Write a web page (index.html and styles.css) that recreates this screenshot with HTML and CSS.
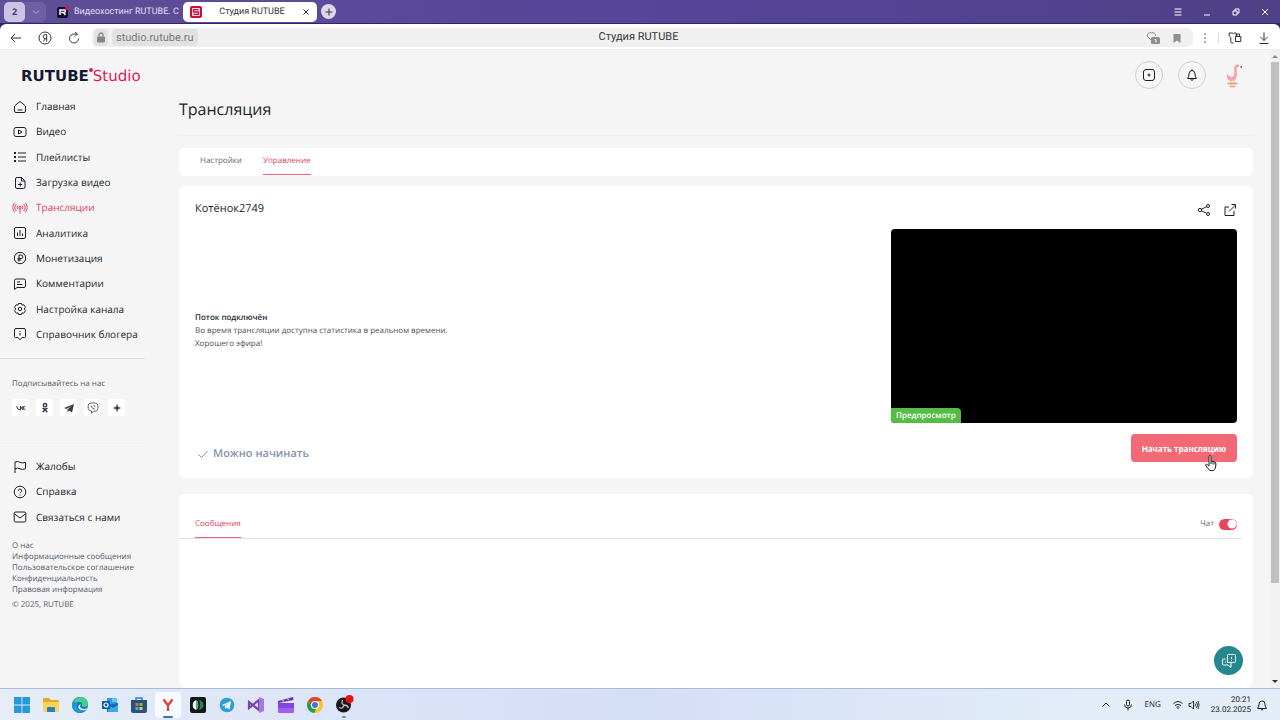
FILE: index.html
```html
<!DOCTYPE html>
<html lang="ru">
<head>
<meta charset="utf-8">
<title>Студия RUTUBE</title>
<meta name="viewport" content="width=device-width, initial-scale=1">
<link rel="stylesheet" href="styles.css">
</head>
<body>
<header class="titlebar">
  <div class="tab-group">
    <span class="tab-count">2</span>
    <button class="plain" aria-label="Список вкладок"><svg class="i10" viewBox="0 0 16 16"><path d="M3 6l5 4 5-4"/></svg></button>
  </div>
  <div class="tab">
    <svg class="fav" viewBox="0 0 12 12"><rect y="1" width="11" height="11" rx="2" fill="#0b1030"/><circle cx="10" cy="2" r="2" fill="#e8104a"/><path d="M3 9V4h4.500q1 0 1 1t-1 1.500H4M6.500 6.500L8.500 9" stroke="#fff" stroke-width="1.500"/></svg>
    <span class="tab-name">Видеохостинг RUTUBE. С</span>
  </div>
  <div class="tab tab-active">
    <svg class="fav" viewBox="0 0 12 12"><rect width="12" height="12" rx="2" fill="#c8103e"/><rect x="2" y="2" width="8" height="8" rx="1" fill="#f8dce4"/><path d="M8.500 3.700h-5v2.300h5v2.300h-5" stroke="#c8103e" stroke-width="1.300"/></svg>
    <span class="tab-name">Студия RUTUBE</span>
    <button class="plain" aria-label="Закрыть вкладку"><svg class="i8" viewBox="0 0 8 8"><path d="M1.500 1.500l5 5M6.500 1.500l-5 5"/></svg></button>
  </div>
  <button class="new-tab" aria-label="Новая вкладка"><svg class="i10" viewBox="0 0 10 10"><path d="M5 1.500v7M1.500 5h7"/></svg></button>
  <div class="window-buttons">
    <button class="plain" aria-label="Меню"><svg class="i10" viewBox="0 0 10 10"><path d="M1.500 2h7M1.500 5h7M1.500 8h7"/></svg></button>
    <button class="plain" aria-label="Свернуть"><svg class="i10" viewBox="0 0 10 10"><path d="M2 8h6"/></svg></button>
    <button class="plain" aria-label="Развернуть"><svg class="i10" viewBox="0 0 10 10"><path d="M2 4h4v4H2zM4 4V2h4v4H6"/></svg></button>
    <button class="plain" aria-label="Закрыть"><svg class="i10" viewBox="0 0 10 10"><path d="M2 2l6 6M8 2l-6 6"/></svg></button>
  </div>
</header>

<div class="toolbar">
  <button class="plain" aria-label="Назад"><svg class="i14" viewBox="0 0 14 14"><path d="M12 7H2M6 3L2 7l4 4"/></svg></button>
  <button class="plain" aria-label="Яндекс"><svg class="i14" viewBox="0 0 14 14"><circle cx="7" cy="7" r="6"/><path d="M8.700 10.500v-7H7.500a2 2 0 0 0 0 4.200h1.200M7.300 7.700l-2 2.800"/></svg></button>
  <button class="plain" aria-label="Обновить"><svg class="i14" viewBox="0 0 14 14"><path d="M11.500 7.500A4.500 4.500 0 1 1 7 3h3M8 1l2.500 2L8 5.500"/></svg></button>
  <div class="address">
    <svg class="i14 lock" viewBox="0 0 14 14"><rect x="3" y="6" width="8" height="6" rx="1" fill="#858585" stroke="none"/><path d="M5 6V4.500a2 2 0 0 1 4 0V6" stroke="#858585" stroke-width="1.300"/></svg>
    <span class="url">studio.rutube.ru</span>
    <span class="page-name">Студия RUTUBE</span>
    <svg class="i14 grey" viewBox="0 0 14 14"><path d="M5 9L1.500 5.500A2.800 2.800 0 0 1 5.500 2 2.800 2.800 0 0 1 9.500 5"/><rect x="5" y="6" width="9" height="7" rx="1.500" fill="#8e8e8e" stroke="none"/><path d="M8.500 8.500h1.500v3" stroke="#fff"/></svg>
    <svg class="i14 grey" viewBox="0 0 14 14"><path d="M3.500 3h7v9L7 9.500 3.500 12z" fill="#8e8e8e" stroke="none"/></svg>
  </div>
  <button class="plain" aria-label="Ещё"><svg class="i14" viewBox="0 0 14 14"><path d="M7 2.500v1.300M7 6.500v1.300M7 10.500v1.300" stroke-width="1.300"/></svg></button>
  <i class="toolbar-line"></i>
  <button class="plain" aria-label="Коллекции"><svg class="i14" viewBox="0 0 14 14"><path d="M5.500 12H4q-1.200 0-1.200-1.200V6.500L1.200 5V2h3q1 1 2 0h2v4M7.500 5.500h5.300v5H7.500zM8.800 5.500V3h2.700v2.500"/></svg></button>
  <button class="plain" aria-label="Загрузки"><svg class="i14" viewBox="0 0 14 14"><path d="M7 1.500v8M3.500 6L7 9.500 10.500 6M2.500 12.500h9"/></svg></button>
</div>

<div class="page">
  <aside class="sidebar">
    <a class="logo" href="#"><b>RUTUBE</b><i></i><span>Studio</span></a>
    <nav class="menu">
      <a href="#"><svg class="i14" viewBox="0 0 14 14"><path d="M1.500 6L7 1.500 12.500 6v5q0 1.500-1.500 1.500H3Q1.500 12.500 1.500 11zM4.500 10h5"/></svg>Главная</a>
      <a href="#"><svg class="i14" viewBox="0 0 14 14"><rect x="1" y="2.500" width="12" height="9" rx="2"/><path d="M5.500 5v4L9 7z"/></svg>Видео</a>
      <a href="#"><svg class="i14" viewBox="0 0 14 14"><path d="M5 3h8M5 7h8M5 11h8"/><path d="M1 3h2M1 7h2M1 11h2" stroke-width="2"/></svg>Плейлисты</a>
      <a href="#"><svg class="i14" viewBox="0 0 14 14"><path d="M8.500 1.500H4Q2.500 1.500 2.500 3v8q0 1.500 1.500 1.500h6.500q1.500 0 1.500-1.500V5zv3.500H12M7.200 6.500v4M5.200 8.500h4"/></svg>Загрузка видео</a>
      <a class="current" href="#"><svg class="i14" viewBox="0 0 14 14"><path d="M3.300 3a5 5 0 0 0 0 7M10.700 3a5 5 0 0 1 0 7M1.700 1.700a7 7 0 0 0 0 9.600M12.300 1.700a7 7 0 0 1 0 9.600M5 4.500a3 3 0 0 0 0 4M9 4.500a3 3 0 0 1 0 4M7 7v5.500"/><circle cx="7" cy="6.300" r="1"/></svg>Трансляции</a>
      <a href="#"><svg class="i14" viewBox="0 0 14 14"><rect x="1.500" y="1.500" width="11" height="11" rx="1.500"/><path d="M4.500 6.500V10M7 4v6M9.500 7.500V10"/></svg>Аналитика</a>
      <a href="#"><svg class="i14" viewBox="0 0 14 14"><circle cx="7" cy="7" r="5.700"/><path d="M6 10.500V4h2a1.800 1.800 0 0 1 0 3.600H4.500M4.500 9H8"/></svg>Монетизация</a>
      <a href="#"><svg class="i14" viewBox="0 0 14 14"><path d="M1.500 12.500v-9q0-1.500 1.500-1.500h8q1.500 0 1.500 1.500V9q0 1.500-1.500 1.500H4zM4 5h3M4 7.500h5.500"/></svg>Комментарии</a>
      <a href="#"><svg class="i14" viewBox="0 0 14 14"><path d="M5.500 1.500h3l.5 1.700 1.700-.5 1.800 2.600L11.200 7l1.300 1.700-1.800 2.600-1.700-.5-.5 1.700h-3L5 10.800l-1.700.5-1.800-2.600L2.800 7 1.500 5.300l1.800-2.600 1.700.5z"/><circle cx="7" cy="7" r="1.700"/></svg>Настройка канала</a>
      <a href="#"><svg class="i14" viewBox="0 0 14 14"><path d="M3 1.500h8q1.500 0 1.500 1.500v6.500q0 1-1 1H9L7 12.800 5 10.500H2.500q-1 0-1-1V3q0-1.500 1.500-1.500zM7 4v1M7 6v2.500"/></svg>Справочник блогера</a>
    </nav>
    <hr class="side-line">
    <p class="follow">Подписывайтесь на нас</p>
    <div class="social">
      <a href="#" aria-label="ВКонтакте"><svg class="i12" viewBox="0 0 12 12"><path d="M1.500 4q.8 4 4 4V4M5.500 6Q7.700 5.700 8 4M5.500 5.800Q7.500 6 8.200 8M8 4v4M8.200 5.900L10.300 4M8.200 5.900L10.500 8"/></svg></a>
      <a href="#" aria-label="Одноклассники"><svg class="i12" viewBox="0 0 12 12"><circle cx="6" cy="3.200" r="1.700" stroke-width="1.400"/><path d="M3.500 6.200q2.500 1.700 5 0M6 7.500l-2.300 2.800M6 7.500l2.300 2.800" stroke-width="1.400"/></svg></a>
      <a href="#" aria-label="Telegram"><svg class="i12" viewBox="0 0 12 12"><path d="M1 6l10-4-2 8.500-3-2-1.500 1.500V7.500L8.500 4 3.500 7z" fill="currentColor" stroke="none"/></svg></a>
      <a href="#" aria-label="Viber"><svg class="i12" viewBox="0 0 12 12"><path d="M3 1.200q3-.6 6 0 1.700.5 1.900 2.300v3Q10.500 8.700 9 9L6.500 9.300 4.500 11.200V9Q1.500 8.700 1.200 6.500v-3Q1.500 1.500 3 1.200zM4 3.500q.2 3 3.800 3.700M6.300 3.200q1.700.2 1.800 1.800" stroke-width=".8"/></svg></a>
      <a href="#" aria-label="Дзен"><svg class="i12" viewBox="0 0 12 12"><path d="M6 2.500Q6.200 5.800 9.500 6 6.200 6.200 6 9.500 5.800 6.200 2.500 6 5.800 5.800 6 2.500z" fill="currentColor" stroke-width=".6"/></svg></a>
    </div>
    <hr class="side-line faint">
    <nav class="menu menu-help">
      <a href="#"><svg class="i14" viewBox="0 0 14 14"><path d="M2 13V2q2.500-1 5 .3t5.500 0v6.500q-3 1.300-5.500 0T2 8.800"/></svg>Жалобы</a>
      <a href="#"><svg class="i14" viewBox="0 0 14 14"><circle cx="7" cy="7" r="5.800"/><path d="M5.300 5.800a1.700 1.700 0 1 1 2.500 1.500Q7 7.700 7 8.300M7 9.600v1"/></svg>Справка</a>
      <a href="#"><svg class="i14" viewBox="0 0 14 14"><rect x="1.200" y="2" width="11.600" height="10" rx="1.500"/><path d="M1.500 4L7 8l5.500-4"/></svg>Связаться с нами</a>
    </nav>
    <div class="legal">
      <a href="#">О нас</a>
      <a href="#">Информационные сообщения</a>
      <a href="#">Пользовательское соглашение</a>
      <a href="#">Конфиденциальность</a>
      <a href="#">Правовая информация</a>
    </div>
    <p class="copyright">© 2025, RUTUBE</p>
  </aside>

  <main class="main">
    <div class="top-actions">
      <button class="round" aria-label="Добавить"><svg class="i14" viewBox="0 0 14 14"><rect x="1.500" y="1.500" width="11" height="11" rx="2.500"/><path d="M7 5.500v3M5.500 7h3"/></svg></button>
      <button class="round" aria-label="Уведомления"><svg class="i14" viewBox="0 0 14 14"><path d="M2.500 10.500Q4 9 4 6a3 3.500 0 0 1 6 0q0 3 1.500 4.500zM5.500 11.500q1.500 1.500 3 0M7 1.200v1.300"/></svg></button>
      <button class="avatar" aria-label="Профиль"><svg viewBox="0 0 26 26"><path d="M17 4q-3.500-1-3.500 2v8" stroke="#f0a0ac" stroke-width="2.500"/><path d="M5 12q-1 7.500 5 7 5.500-.5 4.700-8l-2.500 3q-4 2-7.200-2z" fill="#f3a5ae" stroke="none"/><path d="M9 19v4M12 18v5" stroke="#f3b49c"/><path d="M5.500 21.500h10M8 24.500h5" stroke="#ee9c62" stroke-width="1.400"/><path d="M18.500 5h1.500" stroke="#444" stroke-width="1.500"/></svg></button>
    </div>
    <h1>Трансляция</h1>
    <div class="tabs">
      <a href="#">Настройки</a>
      <a class="selected" href="#">Управление</a>
    </div>

    <section class="card stream">
      <div class="stream-head">
        <h2>Котёнок2749</h2>
        <button class="plain" aria-label="Поделиться"><svg class="i14" viewBox="0 0 14 14"><circle cx="3" cy="7" r="1.700"/><circle cx="11" cy="3" r="1.500"/><circle cx="11" cy="11" r="1.500"/><path d="M4.500 6.200L9.600 3.700M4.500 7.800l5.100 2.500"/></svg></button>
        <button class="plain" aria-label="Открыть"><svg class="i14" viewBox="0 0 14 14"><path d="M6 4H2v8.500h9V8M6 8.500L12.500 2M8.500 1.500h4v4"/></svg></button>
      </div>
      <div class="stream-body">
        <div class="status">
          <strong>Поток подключён</strong>
          <span>Во время трансляции доступна статистика в реальном времени.</span>
          <span>Хорошего эфира!</span>
        </div>
        <div class="video"><span class="badge">Предпросмотр</span></div>
      </div>
      <div class="stream-foot">
        <span class="ready"><svg class="i14" viewBox="0 0 14 14"><path d="M2.500 7.500L5.500 10.500 11.500 4"/></svg>Можно начинать</span>
        <button class="start">Начать трансляцию
          <svg class="pointer" viewBox="0 0 14 18"><path d="M5 9V2.500q0-1 1-1t1 1V7l3 .6q2 .4 2 2.400 0 5-2.500 6.500H6Q3.500 15 1.500 10.800q.5-1.300 2 0L5 12z" fill="#fff" stroke="#222"/><path d="M9 8v2.500M7 7v3M11 8.500v2" stroke="#222"/></svg>
        </button>
      </div>
    </section>

    <section class="card chat">
      <div class="chat-head">
        <a class="selected" href="#">Сообщения</a>
        <label class="switch">Чат <input type="checkbox" role="switch" checked></label>
      </div>
    </section>
  </main>
  <div class="scrollbar"><i class="arrow-up"></i><i class="thumb"></i><i class="arrow-down"></i></div>
  <button class="support" aria-label="Поддержка"><svg viewBox="0 0 16 16"><rect x="6.500" y="1.500" width="8" height="8" rx="1"/><path d="M4.500 6H2.500q-1 0-1 1v4q0 1 1 1H7l3 2.500V10M10.500 4v2M10.500 7.200v.8M4 9h1M6 9h1"/></svg></button>
</div>

<footer class="taskbar">
  <div class="apps">
    <button aria-label="Пуск"><svg viewBox="0 0 16 16"><path d="M0 0h7.600v7.600H0zM8.400 0H16v7.600H8.400zM0 8.400h7.600V16H0zM8.400 8.400H16V16H8.400z" fill="#2798d8"/></svg></button>
    <button aria-label="Проводник"><svg viewBox="0 0 16 16"><path d="M0 2q0-1 1-1h5l2 2h7q1 0 1 1v3H0z" fill="#e5a72e"/><path d="M0 5h16v9q0 1-1 1H1q-1 0-1-1z" fill="#fbd35b"/><path d="M4 11q0-1 1-1h6q1 0 1 1v4H4z" fill="#2383bd"/></svg></button>
    <button aria-label="Edge"><svg viewBox="0 0 16 16"><circle cx="8" cy="8" r="8" fill="#1673bd"/><path d="M1 6Q3 0 9 0q6 .5 7 6 0 4-4 4-3 0-2-2 1-3-3-3-4 0-6 1z" fill="#43cf8c"/><path d="M0 8q2-4 6-3-2 2-1 5 2 4 7 3-3 4-8 2-4-2-4-7z" fill="#2196d9"/><path d="M9 7q-2 2 0 4 3 2 6 0l-1 2q-4 1-7-1-2-4 2-5z" fill="#e9f2f9"/></svg></button>
    <button aria-label="Outlook"><svg viewBox="0 0 16 16"><path d="M5 1h10v8H5z" fill="#2a9ee0"/><path d="M5 9l5-2 6-1v9H5z" fill="#1769b5"/><path d="M10 1h5v4h-5z" fill="#64c8f3"/><path d="M6 8l5 3 5-3v7H6z" fill="#3aabe8"/><rect y="4" width="8" height="8" rx="1" fill="#0f5ba6"/><circle cx="4" cy="8" r="2" stroke="#fff" stroke-width="1.200"/></svg></button>
    <button aria-label="Магазин"><svg viewBox="0 0 16 16"><path d="M5 4V1h6v3" stroke="#2f87c9" stroke-width="1.500"/><path d="M0 3h16v11q0 2-2 2H2q-2 0-2-2z" fill="#27527c"/><path d="M4.500 6h3v3h-3z" fill="#e96249"/><path d="M8.500 6h3v3h-3z" fill="#7bbd4c"/><path d="M4.500 10h3v3h-3z" fill="#4dabdf"/><path d="M8.500 10h3v3h-3z" fill="#f4c64a"/></svg></button>
    <button class="app-active" aria-label="Яндекс Браузер"><svg viewBox="0 0 16 16"><path d="M3.500 2.500L8 8.500l4.500-6M8 8v6" stroke="#e63c38" stroke-width="2.200"/></svg></button>
    <button aria-label="Запись"><svg viewBox="0 0 16 16"><rect width="16" height="16" rx="2" fill="#0b1917"/><path d="M6.500 3a5.200 5.200 0 0 0 0 10z" fill="#f1f6f3"/><path d="M9 3q4.500 1 4.500 5T9 13q2-5 0-10z" fill="#278557"/><path d="M7 4q2 4 0 8" stroke="#7ecf9b"/></svg></button>
    <button aria-label="Telegram"><svg viewBox="0 0 16 16"><circle cx="8" cy="8" r="7.300" fill="#299fd4"/><path d="M3 8l9-4-1.500 8.500-3-2L6 12V9l4-3-5.500 3z" fill="#fff"/></svg></button>
    <button aria-label="Visual Studio"><svg viewBox="0 0 16 16"><path d="M1 5l10 8V3L1 11z" stroke="#7545ad" stroke-width="2.200"/><path d="M11 0l5 2v12l-5 2z" fill="#a77ad9"/></svg></button>
    <button aria-label="Clipchamp"><svg viewBox="0 0 16 16"><path d="M0 4l15-4 .5 3L0 6z" fill="#6731a5"/><path d="M0 6h16v8q0 2-2 2H2q-2 0-2-2z" fill="#8146df"/><path d="M0 11h16v3q0 2-2 2H2q-2 0-2-2z" fill="#a15cf0"/><path d="M4 3l2 1.500M9 1.500L11 3" stroke="#c79cf4" stroke-width="1.500"/></svg></button>
    <button aria-label="Chrome"><svg viewBox="0 0 16 16"><circle cx="8" cy="8" r="8" fill="#f5c52b"/><path d="M1.100 4A8 8 0 0 1 15 4H8L5 9.500z" fill="#df4438"/><path d="M1.100 4L5 10l4 2-2 4A8 8 0 0 1 1.100 4z" fill="#289b52"/><circle cx="8" cy="8" r="4" fill="#fff"/><circle cx="8" cy="8" r="3" fill="#3879d8"/></svg></button>
    <button class="app-running" aria-label="OBS"><svg viewBox="0 0 16 16"><circle cx="7.500" cy="8" r="7.500" fill="#1b1718"/><path d="M6.500 3q-1.500 4 1.500 5M3 10.500q4 2 5-2.500M12.500 11q-1-3-4.500-3" stroke="#bcb9bb" stroke-width="1.300"/><circle cx="13.500" cy="2" r="4" fill="#e9101a"/></svg></button>
  </div>
  <div class="tray">
    <button class="plain" aria-label="Скрытые значки"><svg class="i10" viewBox="0 0 10 10"><path d="M1.500 6.500L5 3l3.500 3.500"/></svg></button>
    <svg class="i12" viewBox="0 0 12 12"><rect x="4.500" y="1" width="3" height="6" rx="1.500"/><path d="M2.500 5.500q0 3.500 3.500 3.500t3.500-3.500M6 9v2.500"/></svg>
    <span class="lang">ENG</span>
    <span class="net"><svg class="i12" viewBox="0 0 12 12"><path d="M1.500 4.500q4.500-4 9 0M3 6.500q3-2.500 6 0M4.500 8.300q1.500-1 3 0M6 9v1"/></svg>
    <svg class="i12" viewBox="0 0 12 12"><path d="M1 4.500h2L5.500 2v8L3 7.500H1zM7 4.500q1 1.500 0 3M8.500 3q2 3 0 6M10 2q2 4 0 8" stroke-width=".9"/></svg></span>
    <time class="clock"><span>20:21</span><span>23.02.2025</span></time>
    <svg class="i12" viewBox="0 0 12 12"><path d="M1.500 9.500Q3 8 3 5a3 3 0 0 1 6 0q0 3 1.500 4.500zM5 10.500q1 1 2 0"/></svg>
  </div>
</footer>
</body>
</html>
```
FILE: styles.css
```css
* { box-sizing: border-box; }
body {
  margin: 0;
  height: 100vh;
  display: flex;
  flex-direction: column;
  overflow: hidden;
  background: #33246a;
  color: #1c1f26;
  font: 10px/13px "Open Sans", "Noto Sans", sans-serif;
  text-rendering: geometricPrecision;
}
a { color: inherit; text-decoration: none; }
h1, h2, p { margin: 0; font-weight: 500; }
button { font: inherit; color: inherit; border: 0; padding: 0; background: none; }
svg { display: block; flex: none; fill: none; stroke: currentColor; overflow: visible; }
.taskbar .apps svg { stroke: none; width: 16px; height: 16px; }
.plain { display: flex; align-items: center; justify-content: center; }
.i8 { width: 8px; height: 8px; }
.i10 { width: 10px; height: 10px; }
.i12 { width: 12px; height: 12px; }
.i14 { width: 14px; height: 14px; }
.fav { width: 12px; height: 12px; stroke: none; }

/* Browser window */
.titlebar {
  flex: none;
  height: 24px;
  display: flex;
  align-items: center;
  padding: 0 10px 0 4px;
  background: linear-gradient(90deg, #5f4f96, #56459a 50%, #4f4187);
  border-bottom: 1px solid #33246a;
}
.tab-group { display: flex; align-items: center; gap: 6px; width: 42px; height: 20px; border-radius: 5px; background: #6e5ea5; color: #cfc6e6; }
.tab-count { width: 21px; height: 20px; border-radius: 5px; background: #cbc3e4; color: #43366f; font: 700 9px/20px "Open Sans", sans-serif; text-align: center; }
.tab { display: flex; align-items: center; gap: 5px; width: 130px; height: 20px; margin-left: 11px; color: #e4def2; font: 10px/20px Roboto, sans-serif; }
.tab-name { flex: 1; white-space: nowrap; }
.tab:not(.tab-active) { font-size: 9px; }
.tab-active { width: 134px; margin-left: -4px; padding: 0 7px; border-radius: 5px; background: #fff; color: #333; text-align: center; font-size: 9px; }
.new-tab { display: flex; align-items: center; justify-content: center; width: 15px; height: 15px; margin-left: 4px; border-radius: 8px; background: #dcd6ee; color: #333; }
.window-buttons { display: flex; gap: 19px; margin-left: auto; color: #fff; }
.toolbar {
  flex: none;
  height: 26px;
  display: flex;
  align-items: center;
  gap: 15px;
  padding: 2px 9px 0;
  background: #fff;
  border-bottom: 1px solid #ececee;
  border-radius: 6px 6px 0 0;
  color: #333;
}
.address { position: relative; flex: 1; display: flex; align-items: center; gap: 10px; height: 19px; margin-left: -4px; margin-right: -10px; padding: 0 9px 0 2px; border-radius: 6px; background: #f0f0f0; font: 11px/18px Roboto, sans-serif; }
.lock, .url { height: 17px; background: #e2e2e2; border-radius: 4px; }
.lock { padding: 1px 0; }
.url { margin-left: -6px; margin-right: auto; padding: 0 4px; color: #777; }
.page-name { position: absolute; inset: 0; text-align: center; color: #333; margin-left: -8px; }
.grey { color: #8e8e8e; }
.toolbar-line { width: 1px; height: 10px; margin: 0 -6px 0 -9px; background: #ddd; }

/* Site */
.page { position: relative; flex: 1; min-height: 0; display: flex; overflow: hidden; background: #f5f5f6; }
.sidebar { flex: none; width: 179px; padding-top: 17px; }
.logo { display: flex; align-items: flex-start; height: 27px; padding-left: 21px; font: 15px/18px "DejaVu Sans", sans-serif; color: #e01b50; }
.logo b { color: #151a33; }
.logo i { width: 4px; height: 4px; margin: 1px 0 0; border-radius: 2px; background: #e01b50; }
.menu { display: grid; grid-auto-rows: 1fr; height: 253px; }
.menu a { display: flex; align-items: center; gap: 9px; padding-left: 13px; }
.menu a.current { color: #dc4358; }
.menu-help { height: 76px; }
.side-line { width: 145px; height: 1px; margin: 11px 0 0; border: 0; background: #dfe0e2; }
.side-line.faint { margin: 27px 0 10px; background: #f0f0f1; }
.follow { margin-top: 18px; padding-left: 12px; font-size: 8px; font-weight: 500; color: #555c68; }
.social { display: flex; gap: 7px; margin-top: 9px; padding-left: 12px; color: #333c4b; }
.social a { display: flex; align-items: center; justify-content: center; width: 17px; height: 17px; border-radius: 3px; background: #fff; }
.legal { display: flex; flex-direction: column; margin-top: 10px; padding-left: 12px; font-size: 8px; line-height: 11px; color: #555c68; }
.copyright { margin-top: 3px; padding-left: 12px; font-size: 8px; font-weight: 400; color: #555c68; }

.main { flex: 1; min-width: 0; display: flex; flex-direction: column; padding: 11px 17px 0 0; }
.top-actions { display: flex; justify-content: flex-end; gap: 15px; height: 28px; padding-right: 4px; }
.round { display: flex; align-items: center; justify-content: center; width: 28px; height: 28px; border: 1px solid #cfd0d3; border-radius: 14px; }
.avatar { width: 28px; padding: 1px; }
.avatar svg { width: 26px; height: 26px; }
h1 { padding: 9px 0 15px; border-bottom: 1px solid #f0f0f1; font-size: 16px; line-height: 22px; }
.tabs { display: flex; align-items: flex-start; gap: 21px; height: 28px; margin-top: 12px; padding: 0 21px; border-radius: 5px; background: #fff; font-size: 8px; line-height: 26px; color: #626976; }
.selected { color: #dc4358; border-bottom: 1px solid #ef6474; }
.card { background: #fff; border-radius: 6px; }
.stream { margin-top: 10px; padding: 16px; }
.stream-head { display: flex; align-items: center; gap: 12px; height: 15px; }
h2 { flex: 1; padding-bottom: 2px; font-size: 11px; line-height: 15px; }
.stream-body { display: flex; align-items: center; justify-content: space-between; margin-top: 12px; }
.status { display: flex; flex-direction: column; padding-top: 8px; font-size: 8px; color: #4b515c; }
.status strong { font-weight: 600; color: #252a34; }
.video { display: flex; align-items: flex-end; width: 346px; height: 194px; border-radius: 4px; background: #000; overflow: hidden; }
.badge { padding: 0 5px; border-radius: 0 4px 0 0; background: #55bd45; color: #fff; font-size: 8px; line-height: 15px; font-weight: 600; }
.stream-foot { display: flex; align-items: center; justify-content: space-between; margin-top: 11px; }
.ready { display: flex; align-items: center; gap: 3px; padding: 11px 0 0 1px; color: #8295a7; font-size: 11px; font-weight: 600; }
.start { position: relative; height: 28px; padding: 0 11px; border-radius: 4px; background: #f26a76; color: #fff; font-size: 8px; font-weight: 700; }
.pointer { position: absolute; right: 19px; bottom: -10px; width: 14px; height: 18px; }
.chat { flex: 1; margin-top: 16px; padding: 16px 11px 0 0; }
.chat-head { display: flex; align-items: stretch; justify-content: space-between; height: 29px; padding: 0 5px 0 16px; border-bottom: 1px solid #e0e1e3; font-size: 8px; line-height: 28px; color: #626976; }
.switch { display: flex; align-items: center; gap: 5px; }
.switch input { appearance: none; width: 18px; height: 11px; margin: 0; border-radius: 6px; background: radial-gradient(circle at 13px 5px, #fff 4px, #e9455b 5px); }
.scrollbar { flex: none; width: 10px; display: flex; flex-direction: column; align-items: center; padding: 5px 0; background: #f1f1f1; }
.arrow-up, .arrow-down { border: 3px solid transparent; }
.arrow-up { border-top: 0; border-bottom-color: #888; }
.arrow-down { border-bottom: 0; border-top-color: #333; margin-top: auto; }
.thumb { width: 8px; height: 83%; margin-top: 4px; background: #bfbfbf; }
.support { position: absolute; right: 37px; bottom: 13px; display: flex; align-items: center; justify-content: center; width: 29px; height: 29px; border-radius: 15px; background: #268791; color: #fff; }
.support svg { width: 16px; height: 16px; }

/* System taskbar */
.taskbar { flex: none; height: 32px; display: flex; align-items: center; justify-content: space-between; padding: 0 12px 0 7px; border-top: 1px solid #a9bbd4; background: linear-gradient(90deg, #e5edf7, #dbe3f8 30%, #d5def7 50%, #e2edf8 85%); }
.apps { display: grid; grid-template-columns: repeat(12, 1fr); justify-items: center; width: 352px; }
.apps button { display: flex; align-items: center; justify-content: center; position: relative; width: 26px; height: 26px; border-radius: 4px; }
.app-active { background: #f7faff; }
.app-active::after, .app-running::after { content: ""; position: absolute; left: 8px; bottom: 0; width: 10px; height: 2px; border-radius: 1px; background: #3c73ad; }
.app-running::after { left: 11px; width: 4px; background: #8a8f9b; }
.tray { display: flex; align-items: center; gap: 11px; color: #222; font: 8px/10px "Open Sans", sans-serif; }
.net { display: flex; gap: 4px; }
.clock { display: flex; flex-direction: column; text-align: right; margin-right: -6px; font-family: Roboto, sans-serif; }
```
